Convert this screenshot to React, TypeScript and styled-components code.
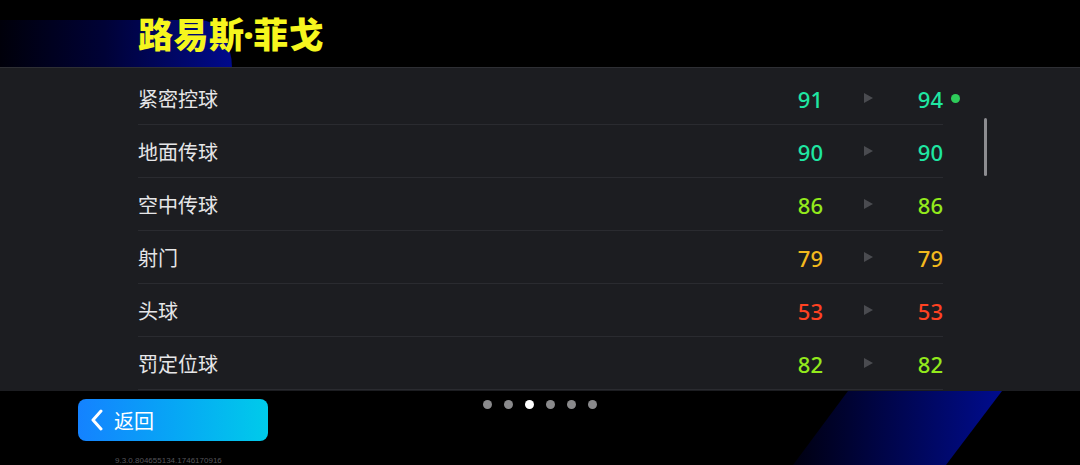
import styled, { createGlobalStyle } from "styled-components";

const GlobalStyle = createGlobalStyle`
  html, body {
    margin: 0;
    padding: 0;
    background: #000;
  }
  body {
    font-family: "Noto Sans", "Noto Sans CJK SC", sans-serif;
  }
`

const Page = styled.div`
  position: relative;
  width: 1080px;
  height: 465px;
  overflow: hidden;
  background: #000;
  display: flex;
  flex-direction: column;
`

// decorative blue stripes behind the content
const TopGlow = styled.div`
  position: absolute;
  left: 0;
  top: 20px;
  width: 232px;
  height: 48px;
  border-top-right-radius: 40px 60px;
  background: linear-gradient(90deg, #00000a 0%, #000236 45%, #000a8c 100%);
`

const BottomStripe = styled.div`
  position: absolute;
  left: 793px;
  top: 391px;
  width: 209px;
  height: 74px;
  clip-path: polygon(26.3% 0, 100% 0, 73.2% 100%, 0 100%);
  background: linear-gradient(90deg, #000010 0%, #00054a 45%, #000c8e 100%);
`

const Header = styled.header`
  position: relative;
  height: 67px;
  padding-left: 138px;
  display: flex;
  align-items: center;
  flex-shrink: 0;
`

const Title = styled.h1`
  margin: 0;
  margin-top: -2px;
  font-family: "Noto Sans CJK SC", sans-serif;
  font-weight: 900;
  font-size: 35px;
  color: #f6f61e;
  letter-spacing: 0.5px;
`

const TitleDot = styled.span`
  font-family: "Noto Sans", sans-serif;
  font-weight: 900;
  margin: 0 -1px;
`

const Panel = styled.section`
  position: relative;
  height: 324px;
  flex-shrink: 0;
  background: #1c1d21;
  border-top: 1px solid #2e2f34;
  box-sizing: border-box;
  padding-top: 4px;
`

const List = styled.ul`
  list-style: none;
  margin: 0 0 0 138px;
  padding: 0;
  width: 805px;
`

const Row = styled.li`
  position: relative;
  height: 53px;
  box-sizing: border-box;
  border-bottom: 1px solid #2a2b30;
  display: grid;
  grid-template-columns: 1fr 80px 90px 30px;
  align-items: center;
`

const Label = styled.span`
  font-family: "Noto Sans CJK SC", sans-serif;
  font-size: 20px;
  color: #e6e6e8;
  margin-top: 1px;
`

const Value = styled.span<{ $color: string }>`
  justify-self: end;
  font-family: "Noto Sans", sans-serif;
  font-weight: 500;
  font-size: 22px;
  color: ${(p) => p.$color};
  white-space: nowrap;
  margin-top: 2px;
`

const Arrow = styled.span`
  justify-self: center;
  width: 0;
  height: 0;
  border-top: 5px solid transparent;
  border-bottom: 5px solid transparent;
  border-left: 9px solid #4a4b50;
`

const NewDot = styled.span`
  position: absolute;
  left: 813px;
  top: 50%;
  width: 9px;
  height: 9px;
  margin-top: -4px;
  border-radius: 50%;
  background: #2ecc5a;
`

const Scrollbar = styled.div`
  position: absolute;
  left: 984px;
  top: 50px;
  width: 3px;
  height: 58px;
  border-radius: 2px;
  background: #8c8c90;
`

const Footer = styled.footer`
  position: relative;
  flex: 1;
  display: grid;
  grid-template-columns: 1fr auto 1fr;
  align-items: start;
  padding-top: 8px;
`

const BackColumn = styled.div`
  padding-left: 78px;
  display: flex;
  flex-direction: column;
`

const BackButton = styled.button`
  width: 190px;
  height: 42px;
  border: none;
  border-radius: 8px;
  background: linear-gradient(90deg, #1482ff 0%, #07a6f5 50%, #00cbea 100%);
  display: flex;
  align-items: center;
  gap: 10px;
  padding: 0 0 0 12px;
  color: #fff;
  font-family: "Noto Sans CJK SC", sans-serif;
  font-size: 20px;
  cursor: pointer;
`

const Version = styled.div`
  margin-top: 16px;
  padding-left: 37px;
  font-family: "Liberation Sans", sans-serif;
  font-size: 8px;
  line-height: 8px;
  color: #55555a;
`

const Dots = styled.div`
  display: flex;
  gap: 12px;
  padding-top: 1px;
`

const Dot = styled.span<{ $active?: boolean }>`
  width: 9px;
  height: 9px;
  border-radius: 50%;
  background: ${(p) => (p.$active ? "#ffffff" : "#8a8a8c")};
`

type Stat = { name: string; before: number; after: number; isNew?: boolean };

const stats: Stat[] = [
  { name: "紧密控球", before: 91, after: 94, isNew: true },
  { name: "地面传球", before: 90, after: 90 },
  { name: "空中传球", before: 86, after: 86 },
  { name: "射门", before: 79, after: 79 },
  { name: "头球", before: 53, after: 53 },
  { name: "罚定位球", before: 82, after: 82 },
];

function colorFor(v: number) {
  if (v >= 90) return "#1fe6a2";
  if (v >= 80) return "#93ea1c";
  if (v >= 70) return "#f2b91e";
  return "#ff4222";
}

function ChevronLeft() {
  return (
    <svg width="14" height="22" viewBox="0 0 14 22">
      <path d="M11 2 L3 11 L11 20" fill="none" stroke="#fff" strokeWidth="3" strokeLinecap="round" strokeLinejoin="round" />
    </svg>
  );
}

export default function App() {
  return (
    <>
      <GlobalStyle />
      <Page>
        <TopGlow />
        <BottomStripe />
        <Header>
          <Title>
            路易斯<TitleDot>·</TitleDot>菲戈
          </Title>
        </Header>
        <Panel>
          <List>
            {stats.map((s) => (
              <Row key={s.name}>
                <Label>{s.name}</Label>
                <Value $color={colorFor(s.before)}>{s.before}</Value>
                <Arrow />
                <Value $color={colorFor(s.after)}>{s.after}</Value>
                {s.isNew && <NewDot />}
              </Row>
            ))}
          </List>
          <Scrollbar />
        </Panel>
        <Footer>
          <BackColumn>
            <BackButton>
              <ChevronLeft />
              返回
            </BackButton>
            <Version>9.3.0.804655134.1746170916</Version>
          </BackColumn>
          <Dots>
            {[0, 1, 2, 3, 4, 5].map((i) => (
              <Dot key={i} $active={i === 2} />
            ))}
          </Dots>
          <div />
        </Footer>
      </Page>
    </>
  );
}
